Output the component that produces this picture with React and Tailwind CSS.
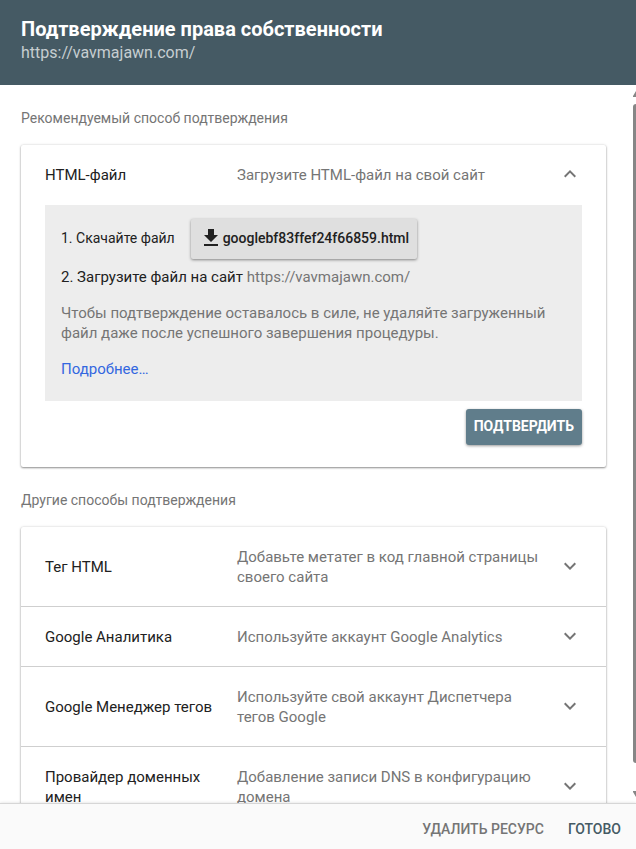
import React from "react";

const SITE_URL = "https://vavmajawn.com/";

const otherMethods = [
  {
    title: "Тег HTML",
    description: "Добавьте метатег в код главной страницы своего сайта",
  },
  {
    title: "Google Аналитика",
    description: "Используйте аккаунт Google Analytics",
  },
  {
    title: "Google Менеджер тегов",
    description: "Используйте свой аккаунт Диспетчера тегов Google",
  },
  {
    title: "Провайдер доменных имен",
    description: "Добавление записи DNS в конфигурацию домена",
  },
];

const Chevron = ({ up = false }) => (
  <svg viewBox="0 0 24 24" className="w-6 h-6 shrink-0 fill-[#757575]">
    {up ? (
      <path d="M12 7l-6 6 1.41 1.41L12 9.83l4.59 4.58L18 13z" />
    ) : (
      <path d="M16.59 7.59L12 12.17 7.41 7.59 6 9l6 6 6-6z" />
    )}
  </svg>
);

// Download arrow with a baseline
const DownloadIcon = () => (
  <svg viewBox="0 0 24 24" className="w-6 h-6 shrink-0 fill-[#212121]">
    <path d="M19 9h-4V3H9v6H5l7 7 7-7zM5 18v2h14v-2H5z" />
  </svg>
);

// Clickable row of a verification method
const MethodRow = ({ title, description, open = false }) => (
  <button
    type="button"
    aria-expanded={open}
    className="flex w-full items-center px-6 pt-5 pb-[19px] text-left text-[15px] leading-5"
  >
    <span className="w-48 shrink-0 pr-4 text-[#212121]">{title}</span>
    <span className="flex-1 pr-3 text-[#757575]">{description}</span>
    <span className="flex h-5 items-center">
      <Chevron up={open} />
    </span>
  </button>
);

const Scrollbar = () => (
  <div className="flex w-[3px] shrink-0 flex-col overflow-hidden pt-1.5 pb-1.5">
    <svg viewBox="0 0 3 6" className="h-1.5 w-[3px] fill-[#868686]">
      <path d="M3 0L0 5v1h3z" />
    </svg>
    <div className="mt-[7px] mb-7 flex-1 rounded-l-sm bg-[#868686]" />
    <svg viewBox="0 0 3 6" className="h-1.5 w-[3px] fill-[#868686]">
      <path d="M0 0h3v6L0 1z" />
    </svg>
  </div>
);

const App = () => {
  return (
    <div className="flex h-screen flex-col bg-white font-[Roboto,sans-serif]">
      <header className="bg-[#455a64] px-[21px] pt-[17px] pb-5">
        <h1 className="text-xl leading-6 font-bold text-white">
          Подтверждение права собственности
        </h1>
        <p className="text-base leading-6 text-[#c7ced1]">{SITE_URL}</p>
      </header>

      <div className="flex min-h-0 flex-1">
        <main className="min-w-0 flex-1 overflow-hidden pt-[23px] pr-[27px] pl-[21px]">
          <h2 className="text-sm leading-5 text-[#757575]">
            Рекомендуемый способ подтверждения
          </h2>
          <section className="mt-[17px] rounded-xs bg-white pb-[22px] shadow-[0_1px_2px_rgba(0,0,0,0.4),0_0_3px_rgba(0,0,0,0.15)]">
            <MethodRow
              title="HTML-файл"
              description="Загрузите HTML-файл на свой сайт"
              open
            />
            <div className="mx-6 mt-px bg-[#ededed] px-4 pt-[14px] pb-[22px] text-[15px] leading-5 text-[#757575]">
              <div className="flex items-center gap-4 text-sm text-[#212121]">
                <span className="pb-0.5">1. Скачайте файл</span>
                <button
                  type="button"
                  className="flex h-10 items-center rounded-xs bg-[#dfdfdf] px-2 pb-0.5 font-medium shadow-[0_1px_3px_rgba(0,0,0,0.45)]"
                >
                  <DownloadIcon />
                  {"googlebf83ffef24f66859.html"}
                </button>
              </div>
              <p className="mt-2">
                <span className="text-[#212121]">
                  2. Загрузите файл на сайт
                </span>{" "}
                {SITE_URL}
              </p>
              <p className="mt-4">
                Чтобы подтверждение оставалось в силе, не удаляйте загруженный
                файл даже после успешного завершения процедуры.
              </p>
              <p className="mt-4">
                <a href="#more" className="text-[#3367e0]">
                  Подробнее…
                </a>
              </p>
            </div>
            <div className="mx-6 mt-2 flex justify-end">
              <button
                type="button"
                className="h-9 rounded-[3px] bg-[#607d8b] px-2 pb-0.5 text-sm font-bold text-white shadow-[0_1px_3px_rgba(0,0,0,0.4)]"
              >
                ПОДТВЕРДИТЬ
              </button>
            </div>
          </section>

          <h2 className="mt-[23px] text-sm leading-5 text-[#757575]">
            Другие способы подтверждения
          </h2>
          <section className="mt-[17px] divide-y divide-[#cfcfcf] rounded-xs bg-white shadow-[0_1px_2px_rgba(0,0,0,0.4),0_0_3px_rgba(0,0,0,0.15)]">
            {otherMethods.map((method) => (
              <MethodRow key={method.title} {...method} />
            ))}
          </section>
        </main>
        <Scrollbar />
      </div>

      <footer className="flex h-[46px] shrink-0 items-center justify-end gap-6 border-t border-[#d6d6d6] bg-[#fafafa] pt-1 pr-[15px] text-sm font-medium shadow-[0_0_3px_rgba(0,0,0,0.15)]">
        <button type="button" className="text-[#757575]">
          УДАЛИТЬ РЕСУРС
        </button>
        <button type="button" className="text-[#455a64]">
          ГОТОВО
        </button>
      </footer>
    </div>
  );
};

export default App;
